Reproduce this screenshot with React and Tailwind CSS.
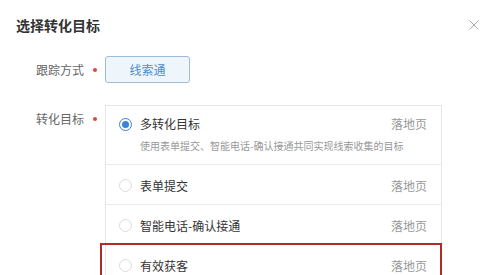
import React from "react";

const font = { fontFamily: '"Noto Sans CJK SC", "Noto Sans", sans-serif' };

function Radio({ checked }) {
  return checked ? (
    <span className="w-[13px] h-[13px] rounded-full border border-[#3b82d6] flex items-center justify-center shrink-0">
      <span className="w-[7px] h-[7px] rounded-full bg-[#3b82d6]" />
    </span>
  ) : (
    <span className="w-[13px] h-[13px] rounded-full border border-[#dcdcdc] bg-white shrink-0" />
  );
}

function Row({ label, highlight }) {
  return (
    <div className="relative h-[40px] border-t border-[#ebebeb] flex items-center pt-[2px] pl-[13px] pr-[14px]">
      <Radio />
      <span className="ml-[8px] text-[12px] text-[#333]">{label}</span>
      <span className="ml-auto text-[12px] text-[#999]">落地页</span>
      {highlight && (
        <div className="absolute left-[-6px] right-[-1px] top-[-2px] h-[50px] border-2 border-[#ad2b28]" />
      )}
    </div>
  );
}

export default function App() {
  return (
    <div className="w-[499px] h-[275px] bg-white overflow-hidden" style={font}>
      <div className="h-[50px] flex items-center justify-between pl-[16px] pr-[20px]">
        <span className="text-[14px] font-bold text-[#333]">选择转化目标</span>
        <svg width="10" height="10" viewBox="0 0 10 10" className="text-[#aaa]">
          <path d="M0.5 0.5L9.5 9.5M9.5 0.5L0.5 9.5" stroke="currentColor" strokeWidth="1" />
        </svg>
      </div>

      <div className="mt-[6px] flex items-center">
        <span className="w-[84px] text-right text-[12px] text-[#666]">跟踪方式</span>
        <span className="w-[21px] flex justify-center">
          <span className="w-[4px] h-[4px] rounded-full bg-[#e0463f]" />
        </span>
        <div className="w-[85px] h-[27px] rounded-[3px] border border-[#9fbcd6] bg-[#eef6fc] flex items-center justify-center text-[12px] text-[#4c8ccc]">
          线索通
        </div>
      </div>

      <div className="mt-[22px] flex items-start">
        <span className="w-[84px] pt-[4px] leading-[20px] text-right text-[12px] text-[#666]">转化目标</span>
        <span className="w-[21px] pt-[12px] flex justify-center">
          <span className="w-[4px] h-[4px] rounded-full bg-[#e0463f]" />
        </span>
        <div className="w-[337px] border border-[#e6e6e6] border-b-0">
          <div className="pt-[8px] pb-[10px] pl-[13px] pr-[14px]">
            <div className="h-[20px] flex items-center">
              <Radio checked />
              <span className="ml-[8px] text-[12px] text-[#333]">多转化目标</span>
              <span className="ml-auto text-[12px] text-[#999]">落地页</span>
            </div>
            <div className="mt-[4px] pl-[21px] h-[16px] leading-[16px] text-[10px] text-[#999] whitespace-nowrap">
              使用表单提交、智能电话-确认接通共同实现线索收集的目标
            </div>
          </div>
          <Row label="表单提交" />
          <Row label="智能电话-确认接通" />
          <Row label="有效获客" highlight />
        </div>
      </div>
    </div>
  );
}
